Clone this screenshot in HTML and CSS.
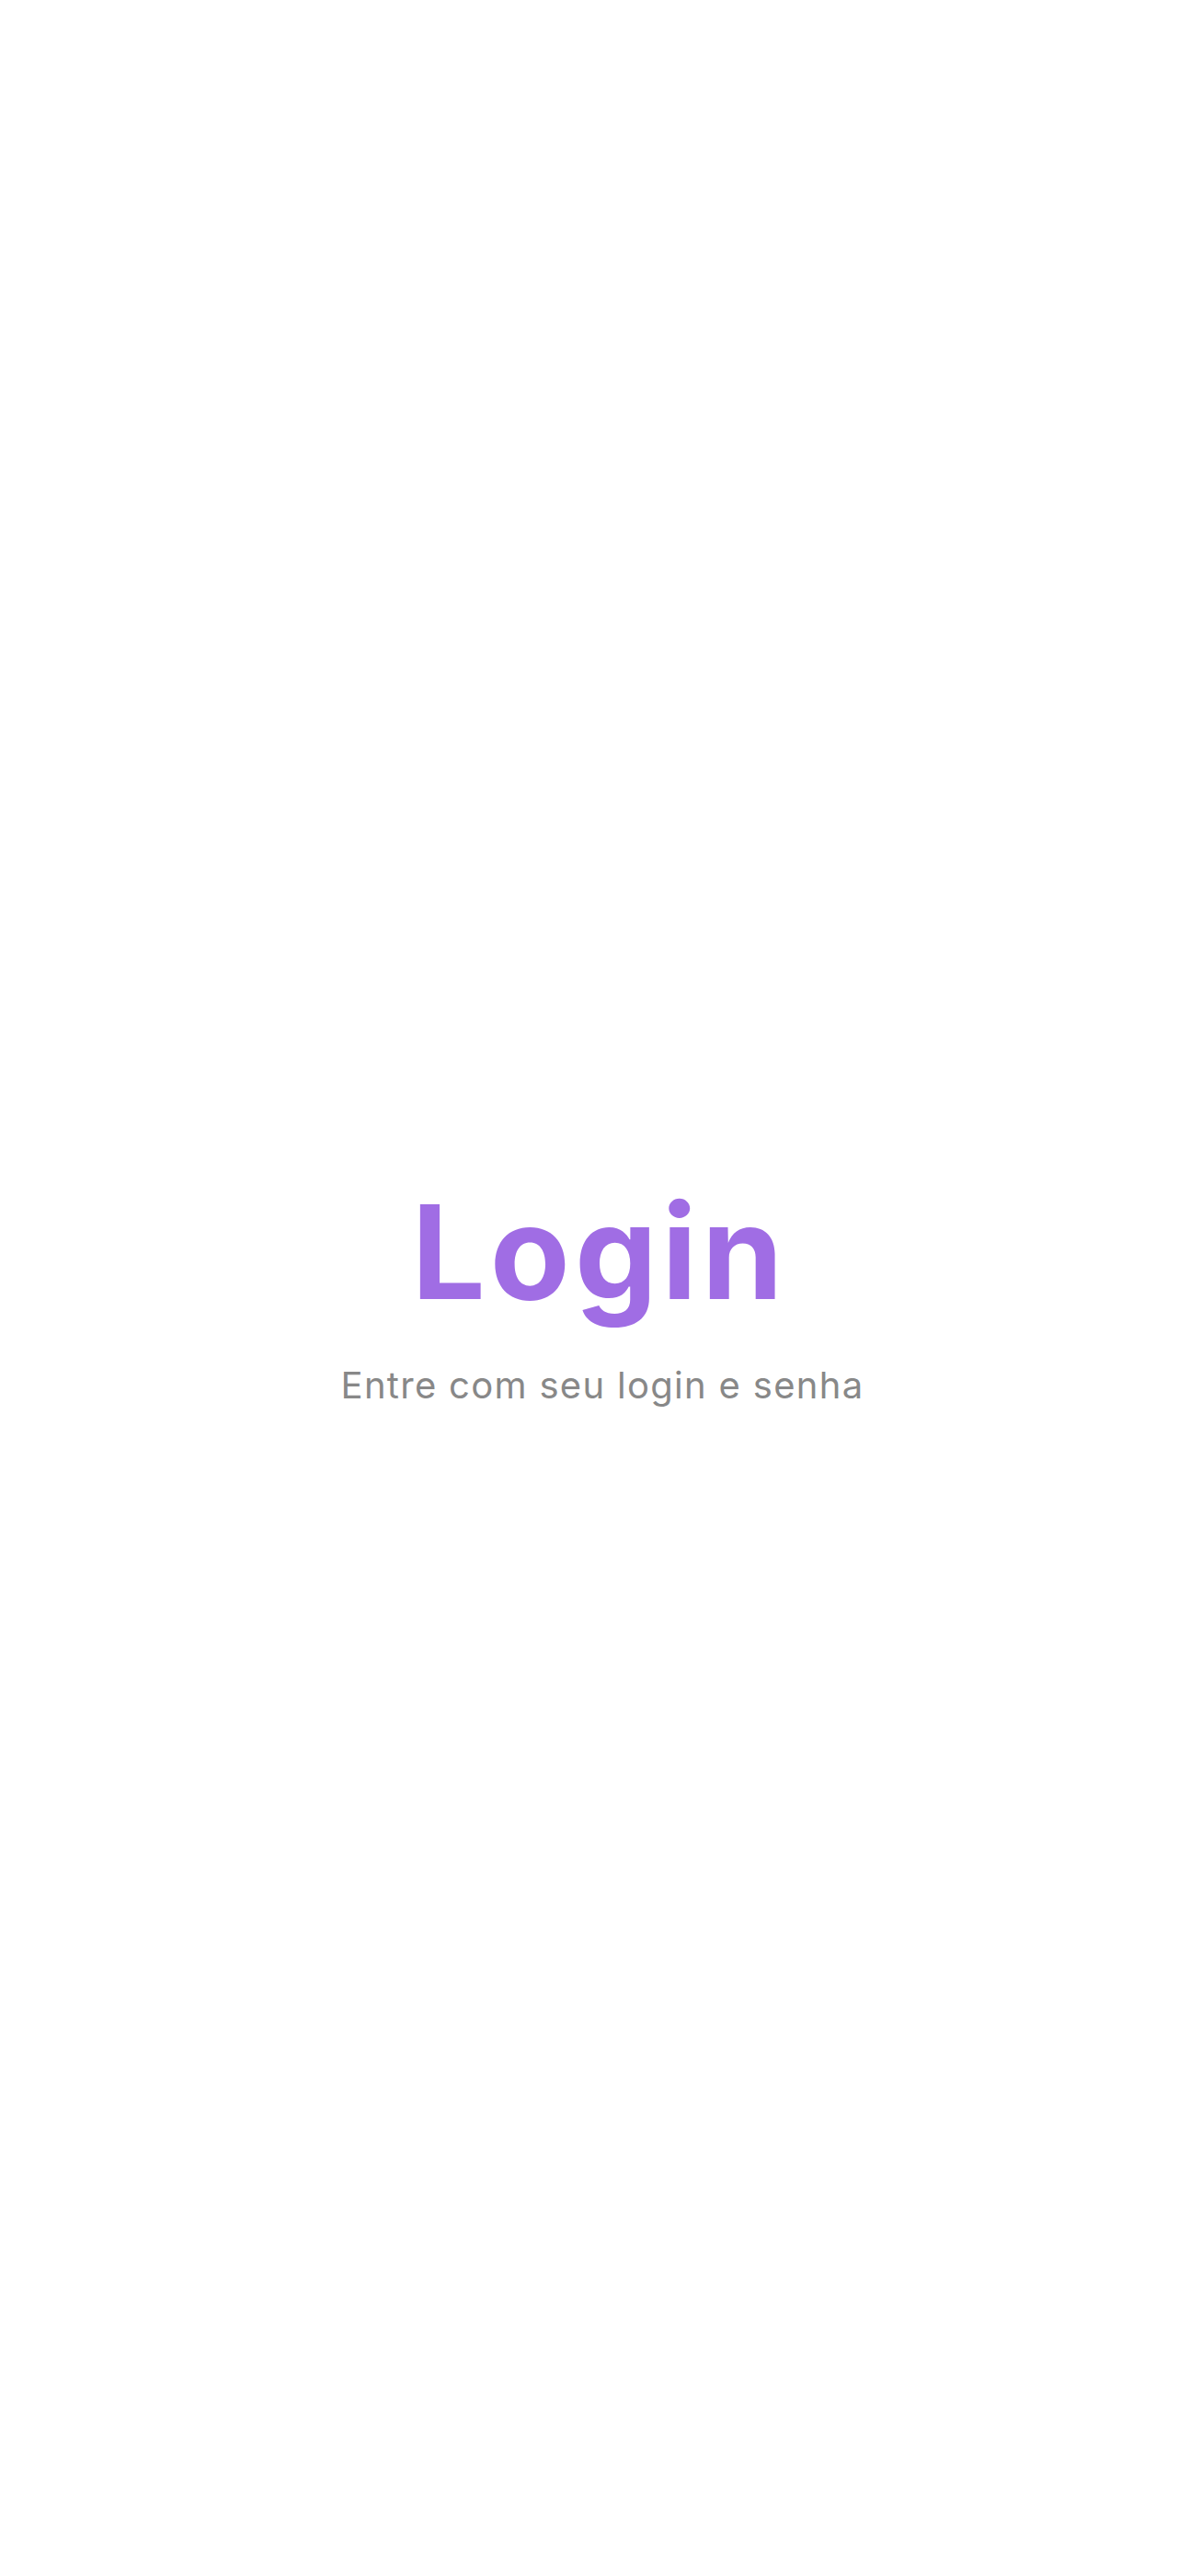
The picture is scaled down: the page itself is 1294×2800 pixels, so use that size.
FILE: index.html
```html
<!DOCTYPE html>
<html lang="pt-BR">
<head>
<meta charset="utf-8">
<title>Login</title>
<link rel="stylesheet" href="styles.css">
</head>
<body>
<main class="page">
  <section class="intro">
    <h1 class="title">Login</h1>
    <p class="subtitle">Entre com seu login e senha</p>
  </section>
</main>
</body>
</html>
```
FILE: styles.css
```css
html, body {
  margin: 0;
  padding: 0;
  background: #ffffff;
}
.page {
  box-sizing: border-box;
  min-height: 2800px;
  padding-top: 18px;
  display: flex;
  align-items: center;
  justify-content: center;
  font-family: Inter, "DejaVu Sans", sans-serif;
}
.intro {
  display: flex;
  flex-direction: column;
  align-items: center;
  gap: 51px;
}
.title {
  margin: 0;
  padding-left: 10px;
  font-size: 142px;
  line-height: 1;
  font-weight: 700;
  letter-spacing: 5px;
  color: #a06de4;
}
.subtitle {
  margin: 0;
  padding-left: 16px;
  font-size: 40px;
  line-height: 1.2;
  font-weight: 400;
  letter-spacing: 1.3px;
  color: #888888;
}
```
